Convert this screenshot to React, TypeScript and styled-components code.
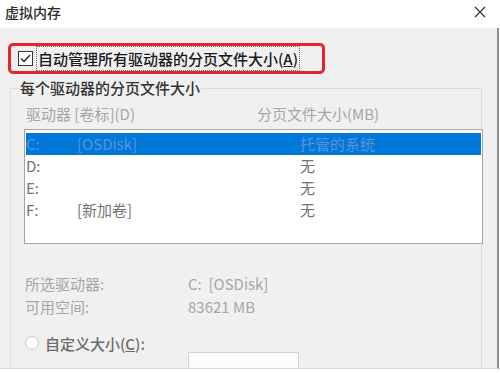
import React, { FC } from 'react';
import styled, { createGlobalStyle } from 'styled-components';

const GlobalStyle = createGlobalStyle`
  html, body {
    margin: 0;
    padding: 0;
    background: #ffffff;
  }
  body {
    font-family: 'Noto Sans CJK SC', 'Noto Sans', sans-serif;
  }
`;

//Parent Div
const Window = styled.div`
  width: 500px;
  height: 373px;
  overflow: hidden;
  background: #ffffff;
  display: flex;
  flex-direction: column;
`;

//Title bar
const TitleBar = styled.div`
  height: 28px;
  flex-shrink: 0;
  display: flex;
  align-items: center;
  justify-content: space-between;
  padding: 0 14px 4px 5px;
  box-sizing: border-box;
  background: #ffffff;
`;
const Title = styled.div`
  font-size: 14px;
  font-weight: 500;
  line-height: 18px;
  color: #2b2b2b;
`;
const Close = styled.div`
  width: 12px;
  height: 12px;
  display: flex;
`;

const Body = styled.div`
  height: 341px;
  width: 499px;
  box-sizing: border-box;
  background: #f0f0f0;
  border-right: 2px solid #8e8e8e;
  border-bottom: 1px solid #d8d8d8;
  overflow: hidden;
  display: flex;
  flex-direction: column;
`;

//Auto manage checkbox with red highlight
const Highlight = styled.div`
  margin: 15px 0 0 8px;
  width: 317px;
  height: 39px;
  box-sizing: border-box;
  border: 3px solid #e3262b;
  border-radius: 5px;
  display: flex;
  align-items: center;
  padding-left: 7px;
`;
const CheckBox = styled.div`
  width: 15px;
  height: 15px;
  box-sizing: border-box;
  border: 1px solid #333333;
  background: #ffffff;
  display: flex;
  align-items: center;
  justify-content: center;
`;
const FocusLabel = styled.div`
  margin-left: 3px;
  height: 25px;
  box-sizing: border-box;
  border: 1px dotted #6a6a6a;
  padding: 0 1px;
  font-size: 15px;
  font-weight: 500;
  line-height: 23px;
  color: #1a1a1a;
  white-space: nowrap;
  u {
    text-decoration: underline;
  }
`;

//Group box
const Group = styled.fieldset`
  margin: 4px 0 0 10px;
  padding: 0;
  width: 472px;
  box-sizing: border-box;
  border: 1px solid #dcdcdc;
  min-inline-size: 0;
`;
const Legend = styled.legend`
  margin-left: 8px;
  padding: 0 1px;
  font-size: 15px;
  font-weight: 500;
  line-height: 20px;
  color: #333333;
`;

const HeaderRow = styled.div`
  margin-top: 6px;
  padding-left: 15px;
  display: grid;
  grid-template-columns: 231px 1fr;
  font-size: 15px;
  line-height: 20px;
  color: #a6a6a6;
  white-space: nowrap;
`;

const ListBox = styled.div`
  margin: 5px 0 0 13px;
  width: 459px;
  height: 115px;
  box-sizing: border-box;
  border: 1px solid #a3a3a3;
  background: #ffffff;
  padding: 3px 0 0 1px;
`;
const Row = styled.div<{ $selected?: boolean }>`
  height: 22px;
  display: grid;
  grid-template-columns: 51px 223px 1fr;
  align-items: center;
  font-size: 15px;
  line-height: 22px;
  white-space: nowrap;
  background: ${(p) => (p.$selected ? '#0078d7' : 'transparent')};
  color: ${(p) => (p.$selected ? '#5b92da' : '#737373')};
  margin-right: 1px;
`;

const InfoRow = styled.div<{ $gap?: number }>`
  margin-top: ${(p) => p.$gap ?? 0}px;
  padding-left: 14px;
  display: grid;
  grid-template-columns: 163px 1fr;
  font-size: 15px;
  line-height: 23px;
  color: #a6a6a6;
  white-space: nowrap;
`;

const RadioRow = styled.div`
  margin-top: 14px;
  padding-left: 14px;
  height: 22px;
  display: flex;
  align-items: center;
  gap: 6px;
  font-size: 15px;
  font-weight: 500;
  color: #6c6c6c;
  white-space: nowrap;
  u {
    text-decoration: underline;
  }
`;
const Radio = styled.div`
  width: 14px;
  height: 14px;
  box-sizing: border-box;
  border-radius: 50%;
  border: 1px solid #c4c4c4;
  background: #ffffff;
`;
const InputRow = styled.div`
  margin-top: -2px;
  padding-left: 177px;
`;
const InputBox = styled.div`
  width: 111px;
  height: 22px;
  box-sizing: border-box;
  border: 1px solid #d2d2d2;
  background: #fbfbfb;
`;

const drives = [
  { d: 'C:', label: '[OSDisk]', size: '托管的系统', selected: true },
  { d: 'D:', label: '', size: '无' },
  { d: 'E:', label: '', size: '无' },
  { d: 'F:', label: '[新加卷]', size: '无' },
];

const App: FC = () => {
  return (
    <>
      <GlobalStyle />
      <Window>
        <TitleBar>
          <Title>虚拟内存</Title>
          <Close>
            <svg width="12" height="12" viewBox="0 0 12 12">
              <path d="M1 1 L11 11 M11 1 L1 11" stroke="#333" strokeWidth="1.2" />
            </svg>
          </Close>
        </TitleBar>
        <Body>
          <Highlight>
            <CheckBox>
              <svg width="13" height="13" viewBox="0 0 13 13">
                <path d="M2 6.5 L5 9.5 L11 3" fill="none" stroke="#222" strokeWidth="1.3" />
              </svg>
            </CheckBox>
            <FocusLabel>
              自动管理所有驱动器的分页文件大小(<u>A</u>)
            </FocusLabel>
          </Highlight>
          <Group>
            <Legend>每个驱动器的分页文件大小</Legend>
            <HeaderRow>
              <span>驱动器 [卷标](D)</span>
              <span>分页文件大小(MB)</span>
            </HeaderRow>
            <ListBox>
              {drives.map((r) => (
                <Row key={r.d} $selected={r.selected}>
                  <span>{r.d}</span>
                  <span>{r.label}</span>
                  <span>{r.size}</span>
                </Row>
              ))}
            </ListBox>
            <InfoRow $gap={28}>
              <span>所选驱动器:</span>
              <span>C:&nbsp;&nbsp;[OSDisk]</span>
            </InfoRow>
            <InfoRow>
              <span>可用空间:</span>
              <span>83621 MB</span>
            </InfoRow>
            <RadioRow>
              <Radio />
              <span>
                自定义大小(<u>C</u>):
              </span>
            </RadioRow>
            <InputRow>
              <InputBox />
            </InputRow>
          </Group>
        </Body>
      </Window>
    </>
  );
};

export default App;
